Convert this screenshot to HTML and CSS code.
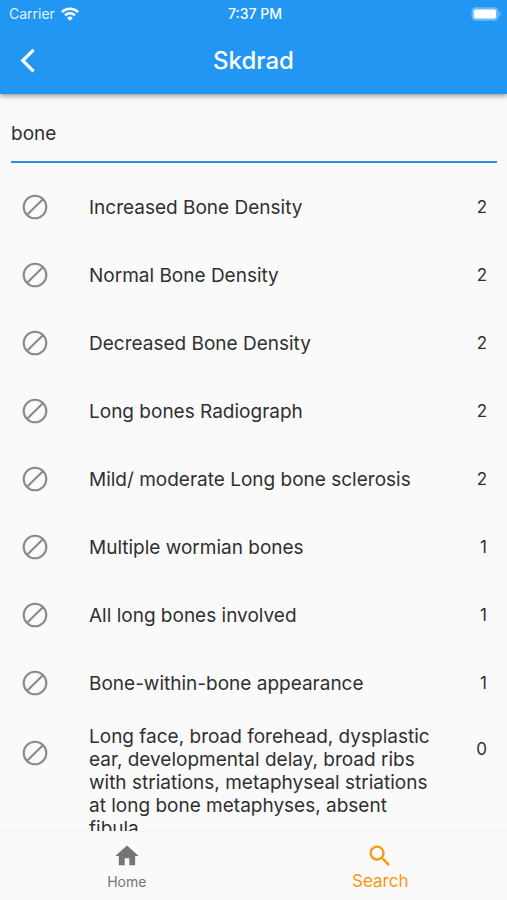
FILE: index.html
```html
<!DOCTYPE html>
<html lang="en">
<head>
<meta charset="utf-8">
<meta name="viewport" content="width=device-width, initial-scale=1">
<title>Skdrad</title>
<link rel="stylesheet" href="styles.css">
</head>
<body>
<svg class="defs" aria-hidden="true">
  <symbol id="none" viewBox="0 0 26 26">
    <circle cx="13" cy="13" r="11.3" fill="none" stroke="currentColor" stroke-width="2.1"/>
    <path d="M5.4 20.6 20.6 5.4" stroke="currentColor" stroke-width="2.1"/>
  </symbol>
</svg>
<header class="top">
  <div class="status">
    <div class="carrier">
      <span>Carrier</span>
      <svg class="wifi" viewBox="0 0 18 14" aria-hidden="true">
        <g fill="none" stroke="currentColor" stroke-width="2.5">
          <path d="M.9 5.2a11.5 11.5 0 0 1 16.2 0"/>
          <path d="M4 8.3a7.1 7.1 0 0 1 10 0"/>
        </g>
        <path d="M9 13.8 6.1 10.9a4.1 4.1 0 0 1 5.800 0Z" fill="currentColor"/>
      </svg>
    </div>
    <time class="clock">7:37 PM</time>
    <svg class="battery" viewBox="0 0 30 14" aria-hidden="true">
      <rect x=".5" y=".2" width="27" height="13.600" rx="4.200" fill="#fff" opacity=".35"/>
      <rect x="2.800" y="2.600" width="22.200" height="8.800" rx="2" fill="#fff"/>
      <path d="M28.200 5v4q1.500-.6 1.500-2t-1.500-2Z" fill="#fff" opacity=".4"/>
    </svg>
  </div>
  <div class="bar">
    <button class="back" type="button" aria-label="Back">
      <svg viewBox="0 0 16 26" aria-hidden="true"><path d="M13.600 1.900 2.800 12.600 13.600 23.300" fill="none" stroke="currentColor" stroke-width="3.300"/></svg>
    </button>
    <h1>Skdrad</h1>
  </div>
</header>
<main>
  <input class="query" type="text" value="bone" aria-label="Search term">
  <ul class="results">
    <li><svg><use href="#none"/></svg><span class="name">Increased Bone Density</span><span class="count">2</span></li>
    <li><svg><use href="#none"/></svg><span class="name">Normal Bone Density</span><span class="count">2</span></li>
    <li><svg><use href="#none"/></svg><span class="name">Decreased Bone Density</span><span class="count">2</span></li>
    <li><svg><use href="#none"/></svg><span class="name">Long bones Radiograph</span><span class="count">2</span></li>
    <li><svg><use href="#none"/></svg><span class="name">Mild/ moderate Long bone sclerosis</span><span class="count">2</span></li>
    <li><svg><use href="#none"/></svg><span class="name">Multiple wormian bones</span><span class="count">1</span></li>
    <li><svg><use href="#none"/></svg><span class="name">All long bones involved</span><span class="count">1</span></li>
    <li><svg><use href="#none"/></svg><span class="name">Bone-within-bone appearance</span><span class="count">1</span></li>
    <li class="long"><svg><use href="#none"/></svg><span class="name">Long face, broad forehead, dysplastic ear, developmental delay, broad ribs with striations, metaphyseal striations at long bone metaphyses, absent fibula</span><span class="count">0</span></li>
  </ul>
</main>
<nav class="tabs">
  <a href="#home"><svg viewBox="0 0 24 24" aria-hidden="true"><path d="M10 20v-6h4v6h5v-8h3L12 3 2 12h3v8z" fill="currentColor"/></svg><span>Home</span></a>
  <a href="#search" class="active" aria-current="page"><svg viewBox="0 0 24 24" aria-hidden="true"><path d="M15.500 14h-.79l-.28-.27A6.470 6.470 0 0 0 16 9.500 6.500 6.500 0 1 0 9.500 16c1.610 0 3.090-.59 4.230-1.570l.27.28v.79l5 4.990L20.490 19l-4.990-5zm-6 0C7.010 14 5 11.990 5 9.500S7.010 5 9.500 5 14 7.010 14 9.500 11.990 14 9.500 14z" fill="currentColor"/></svg><span>Search</span></a>
</nav>
</body>
</html>
```

FILE: styles.css
```css
* { box-sizing: border-box; }

body {
  margin: 0;
  height: 100vh;
  display: flex;
  flex-direction: column;
  overflow: hidden;
  background: #fafafa;
  color: #303030;
  font-family: Inter, "Liberation Sans", sans-serif;
  font-size: 19px;
  line-height: 23px;
}

.defs { display: none; }

.top {
  z-index: 1;
  background: #2196f3;
  color: #fff;
  box-shadow: 0 2px 5px rgba(0, 0, 0, .4);
}

.status {
  display: grid;
  grid-template-columns: 1fr auto 1fr;
  align-items: center;
  height: 27px;
  padding: 0 6px 0 9px;
  font-size: 14px;
}

.carrier {
  display: flex;
  align-items: center;
  gap: 6px;
  color: #e3f2fd;
}

.wifi { width: 18px; height: 14px; color: #fff; }
.clock { font-weight: 500; }
.battery { width: 30px; height: 14px; justify-self: end; }

.bar {
  display: grid;
  grid-template-columns: 56px 1fr 56px;
  align-items: center;
  height: 67px;
}

.back {
  display: flex;
  justify-content: center;
  padding: 12px;
  border: 0;
  background: none;
  color: inherit;
}

.back svg { width: 16px; height: 26px; }

h1 {
  margin: 0;
  text-align: center;
  font-size: 24px;
  line-height: 30px;
  font-weight: 500;
}

main {
  flex: 1;
  min-height: 0;
  display: flex;
  flex-direction: column;
  overflow: hidden;
}

.query {
  flex: none;
  height: 57px;
  margin: 12px 10px 10px 11px;
  padding: 0;
  border: 0;
  border-bottom: 2px solid #2b91e2;
  border-radius: 0;
  outline: 0;
  background: none;
  color: inherit;
  font: inherit;
}

.results {
  flex: 1;
  min-height: 0;
  margin: 0;
  padding: 0;
  overflow: hidden;
  list-style: none;
}

.results li {
  display: grid;
  grid-template-columns: 26px 1fr 16px;
  align-items: center;
  min-height: 68px;
  padding: 0 20px 0 22px;
}

.results svg { width: 26px; height: 26px; color: #8a8a8a; }
.name { padding: 0 32px 0 41px; }
.count { text-align: right; font-size: 17px; }

.results .long { align-items: start; padding-top: 8px; }
.long svg { margin-top: 15px; }
.long .count { margin-top: 13px; }

.tabs {
  display: grid;
  grid-template-columns: 1fr 1fr;
  height: 69px;
  border-top: 1px solid #f4f4f4;
  background: #fafafa;
}

.tabs a {
  display: flex;
  flex-direction: column;
  align-items: center;
  padding-top: 10px;
  color: #757575;
  font-size: 14px;
  text-decoration: none;
}

.tabs svg { width: 28px; height: 28px; }
.tabs .active { color: #fb9610; font-size: 17px; }
```
